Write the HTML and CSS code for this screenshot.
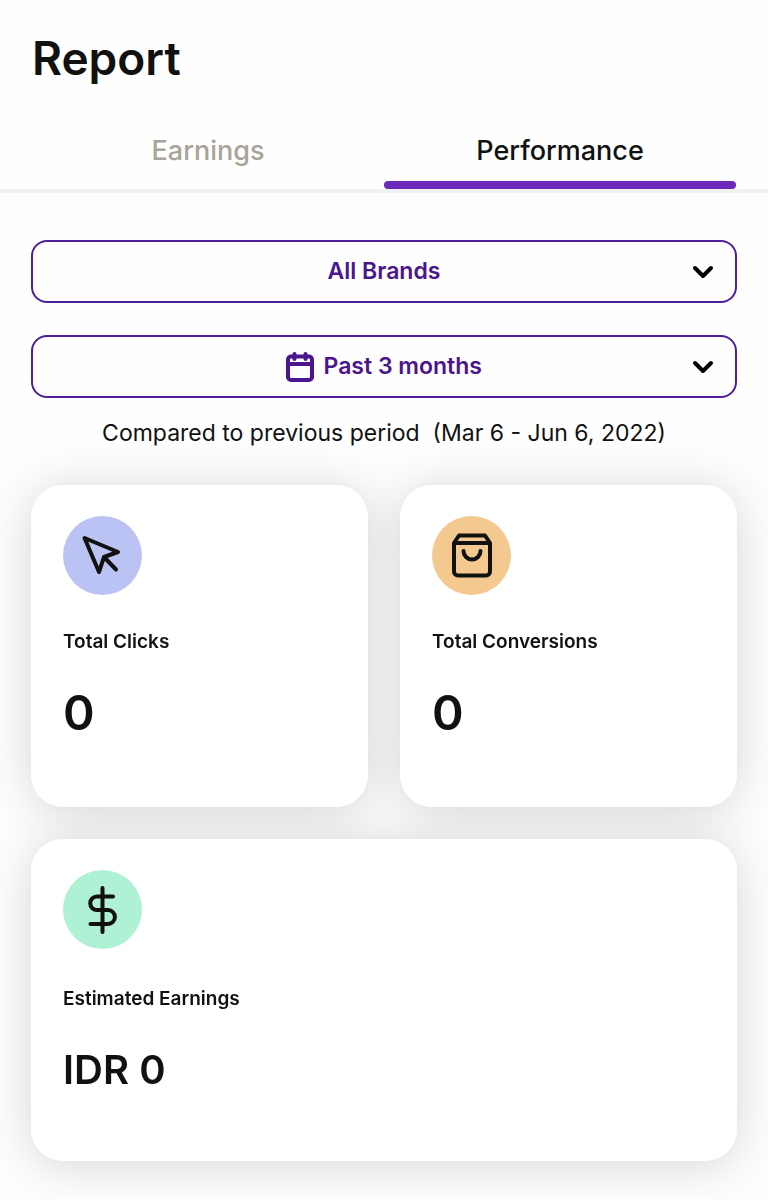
FILE: index.html
```html
<!DOCTYPE html>
<html lang="en">
<head>
<meta charset="utf-8">
<meta name="viewport" content="width=device-width, initial-scale=1">
<title>Report</title>
<link rel="stylesheet" href="styles.css">
</head>
<body>
<header class="header">
  <h1 class="title">Report</h1>
  <div class="tabs" role="tablist">
    <button class="tab" type="button" role="tab" aria-selected="false">Earnings</button>
    <button class="tab tab-active" type="button" role="tab" aria-selected="true">Performance</button>
  </div>
</header>
<main class="content">
  <form class="filters">
    <label class="filter">
      <select class="filter-select" aria-label="Brand"><option>All Brands</option></select>
      <svg class="chevron" viewBox="0 0 24 24" aria-hidden="true"><path d="M4 8l8 8 8-8"/></svg>
    </label>
    <label class="filter">
      <svg class="calendar" viewBox="0 0 28 30" aria-hidden="true"><rect x="2" y="4.500" width="24" height="23.500" rx="3"/><path d="M2 12h24M8.500 2v5M19.500 2v5"/></svg>
      <select class="filter-select" aria-label="Period"><option>Past 3 months</option></select>
      <svg class="chevron" viewBox="0 0 24 24" aria-hidden="true"><path d="M4 8l8 8 8-8"/></svg>
    </label>
  </form>
  <p class="period">Compared to previous period &nbsp;(Mar 6 - Jun 6, 2022)</p>
  <section class="cards">
    <article class="card">
      <span class="badge badge-blue">
        <svg class="icon" viewBox="0 0 48 48" aria-hidden="true"><path d="M5.500 6L39 20l-14 5-5 15zM25 25l12 12.500"/></svg>
      </span>
      <h2 class="label">Total Clicks</h2>
      <p class="value">0</p>
    </article>
    <article class="card">
      <span class="badge badge-orange">
        <svg class="icon" viewBox="0 0 48 48" aria-hidden="true"><path d="M6 11l5-7.500h26l5 7.500M6 11v28.500a4 4 0 0 0 4 4h28a4 4 0 0 0 4-4V11zM15.500 19a8.500 8.500 0 0 0 17 0"/></svg>
      </span>
      <h2 class="label">Total Conversions</h2>
      <p class="value">0</p>
    </article>
    <article class="card card-wide">
      <span class="badge badge-green">
        <svg class="icon" viewBox="0 0 48 48" aria-hidden="true"><path d="M23.500 2v44M34 10.500H18a6.800 6.800 0 0 0 0 13.600h11a6.900 6.900 0 0 1 0 13.800H11.500"/></svg>
      </span>
      <h2 class="label">Estimated Earnings</h2>
      <p class="value value-money">IDR 0</p>
    </article>
  </section>
</main>
</body>
</html>
```

FILE: styles.css
```css
* {
  box-sizing: border-box;
}

body {
  margin: 0;
  background: #fefefe;
  color: #11110f;
  font-family: Inter, "Liberation Sans", sans-serif;
}

h1, h2, p {
  margin: 0;
}

.header {
  padding-top: 28px;
  border-bottom: 4px solid #f0f0f0;
}

.title {
  padding: 0 32px;
  font-size: 46px;
  line-height: 60px;
  font-weight: 600;
}

.tabs {
  display: flex;
  padding: 24px 32px 0;
}

.tab {
  display: flex;
  flex: 1;
  flex-direction: column;
  align-items: center;
  justify-content: flex-start;
  gap: 14px;
  height: 77px;
  padding: 23px 0 0;
  border: 0;
  background: none;
  color: #a8a496;
  font: 500 27px/32px Inter, "Liberation Sans", sans-serif;
  cursor: pointer;
}

.tab-active {
  color: #11110f;
}

.tab-active::after {
  content: "";
  width: 100%;
  height: 8px;
  border-radius: 4px;
  background: #6b2bb8;
}

.content {
  padding: 47px 31px 38px;
}

.filters {
  display: grid;
  gap: 32px;
}

.filter {
  position: relative;
  display: flex;
  align-items: center;
  justify-content: center;
  gap: 10px;
  height: 63px;
  border: 2px solid #4f1f96;
  border-radius: 16px;
  color: #4b158d;
}

.filter-select {
  appearance: none;
  padding: 0 0 2px;
  border: 0;
  background: none;
  color: inherit;
  font: 600 23px/32px Inter, "Liberation Sans", sans-serif;
}

.chevron {
  position: absolute;
  right: 20px;
  width: 24px;
  height: 24px;
  fill: none;
  stroke: #000;
  stroke-width: 4;
  stroke-linecap: round;
  stroke-linejoin: round;
}

.calendar {
  width: 28px;
  height: 30px;
  fill: none;
  stroke: currentColor;
  stroke-width: 4;
  stroke-linecap: round;
}

.period {
  padding: 19px 0 36px;
  text-align: center;
  font-size: 23px;
  line-height: 32px;
}

.cards {
  display: grid;
  grid-template-columns: 1fr 1fr;
  gap: 32px;
  filter: drop-shadow(0 4px 24px rgba(0, 0, 0, 0.16));
}

.card {
  min-height: 322px;
  padding: 31px 32px;
  border-radius: 32px;
  background: #fff;
}

.card-wide {
  grid-column: 1 / -1;
}

.card-wide .label {
  padding-top: 36px;
}

.badge {
  display: flex;
  align-items: center;
  justify-content: center;
  width: 79px;
  height: 79px;
  border-radius: 50%;
}

.badge-blue {
  background: #bbc3f5;
}

.badge-orange {
  background: #f3c990;
}

.badge-green {
  background: #aff1d5;
}

.icon {
  width: 48px;
  height: 48px;
  fill: none;
  stroke: #11110f;
  stroke-width: 4;
  stroke-linecap: round;
  stroke-linejoin: round;
}

.label {
  padding-top: 33px;
  font-size: 19px;
  line-height: 28px;
  font-weight: 600;
}

.value {
  padding-top: 27px;
  font-size: 48px;
  line-height: 60px;
  font-weight: 600;
}

.value-money {
  font-size: 40px;
}
```
